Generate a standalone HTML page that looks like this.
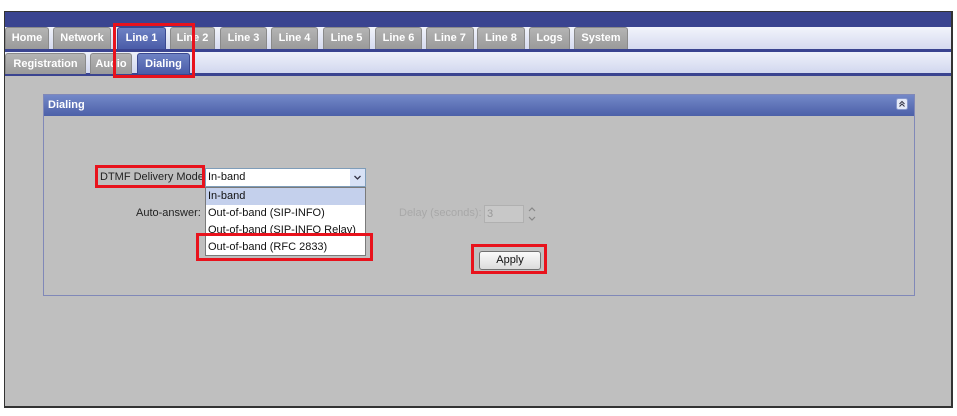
<!DOCTYPE html>
<html><head><style>
*{margin:0;padding:0;box-sizing:border-box}
body{width:957px;height:416px;background:#fff;position:relative;overflow:hidden;font-family:"Liberation Sans",sans-serif;font-size:11px}
.a{position:absolute;white-space:nowrap}
.tab{position:absolute;top:27px;height:22px;background:linear-gradient(#b4b4b4,#9a9a9a);border:1px solid #8a8a8a;border-bottom:none;border-radius:3px 3px 0 0;color:#fff;font-weight:bold;font-size:11px;line-height:21px;text-align:center;white-space:nowrap}
.sel{background:linear-gradient(#6e82c4,#4a5ca8);border-color:#3a4890}
.st{top:53px;height:21px}
.red{position:absolute;border:3px solid #e8121c}
.lbl{position:absolute;color:#222;font-size:11px;white-space:nowrap}
.it{position:absolute;left:0;width:100%;height:17px;padding-left:2px;line-height:17px;color:#111;font-size:11px;white-space:nowrap;overflow:hidden}
</style></head><body>
<div class="a" style="left:4px;top:11px;width:949px;height:397px;background:#bfbfbf;border:1px solid #333;border-width:1px 2px 2px 1px"></div>
<div class="a" style="left:5px;top:12px;width:946px;height:15px;background:#3a4490"></div>
<div class="a" style="left:5px;top:27px;width:946px;height:23px;background:linear-gradient(#f2f4fb,#d4d9ef)"></div>
<div class="a" style="left:5px;top:49px;width:946px;height:3px;background:#3a4490"></div>
<div class="a" style="left:5px;top:52px;width:946px;height:22px;background:linear-gradient(#eef1fa,#d0d6ee)"></div>
<div class="a" style="left:5px;top:73px;width:946px;height:3px;background:#3a4490"></div>

<div class="tab" style="left:5px;width:44px">Home</div>
<div class="tab" style="left:53px;width:58px">Network</div>
<div class="tab sel" style="left:117px;width:49px">Line 1</div>
<div class="tab" style="left:170px;width:45px">Line 2</div>
<div class="tab" style="left:220px;width:47px">Line 3</div>
<div class="tab" style="left:271px;width:47px">Line 4</div>
<div class="tab" style="left:323px;width:47px">Line 5</div>
<div class="tab" style="left:375px;width:47px">Line 6</div>
<div class="tab" style="left:426px;width:48px">Line 7</div>
<div class="tab" style="left:477px;width:48px">Line 8</div>
<div class="tab" style="left:529px;width:41px">Logs</div>
<div class="tab" style="left:574px;width:54px">System</div>

<div class="tab st" style="left:5px;width:81px">Registration</div>
<div class="tab st" style="left:90px;width:42px">Audio</div>
<div class="tab st sel" style="left:137px;width:53px">Dialing</div>

<div class="a" style="left:43px;top:94px;width:872px;height:202px;background:#bfbfbf;border:1px solid #8088b8"></div>
<div class="a" style="left:44px;top:95px;width:870px;height:21px;background:linear-gradient(#7388c8,#4c60a8);color:#fff;font-weight:bold;font-size:11px;line-height:20px;padding-left:4px">Dialing</div>
<svg class="a" style="left:896px;top:98px" width="12" height="12" viewBox="0 0 12 12"><rect x="0.5" y="0.5" width="11" height="11" rx="2" fill="#e4e9f7" stroke="#8898cc"/><path d="M3.5 6 L6 3.5 L8.5 6 M3.5 8.5 L6 6 L8.5 8.5" fill="none" stroke="#334" stroke-width="1"/></svg>

<div class="lbl" style="left:100px;top:171px">DTMF Delivery Mode:</div>
<div class="lbl" style="left:136px;top:207px">Auto-answer:</div>
<div class="a" style="left:205px;top:168px;width:161px;height:19px;background:#fff;border:1px solid #7f9db9;font-size:11px;line-height:17px;padding-left:2px;color:#111">In-band</div>
<svg class="a" style="left:350px;top:169px" width="15" height="17" viewBox="0 0 15 17"><rect width="15" height="17" fill="#d8e2f6"/><path d="M4.5 7 L7.5 10 L10.5 7" fill="none" stroke="#334" stroke-width="1.3"/></svg>
<div class="a" style="left:205px;top:187px;width:161px;height:69px;background:#fff;border:1px solid #7a7a7a">
<div class="it" style="top:0;background:#c4d0ec">In-band</div>
<div class="it" style="top:17px">Out-of-band (SIP-INFO)</div>
<div class="it" style="top:34px">Out-of-band (SIP-INFO Relay)</div>
<div class="it" style="top:51px">Out-of-band (RFC 2833)</div>
</div>
<div class="lbl" style="left:399px;top:207px;color:#a8a8a8">Delay (seconds):</div>
<div class="a" style="left:484px;top:205px;width:40px;height:18px;background:#c8c8c8;border:1px solid #b0b0b0;color:#999;font-size:11px;line-height:16px;padding-left:2px">3</div>
<svg class="a" style="left:525px;top:205px" width="14" height="18" viewBox="0 0 14 18"><path d="M4 6 L7 3 L10 6 M4 12 L7 15 L10 12" fill="none" stroke="#888" stroke-width="1.2"/></svg>
<div class="a" style="left:479px;top:251px;width:62px;height:19px;background:linear-gradient(#fafafa,#dcdcdc);border:1px solid #707070;border-radius:3px;text-align:center;line-height:17px;font-size:11px;color:#111">Apply</div>

<div class="red" style="left:113px;top:23px;width:82px;height:55px"></div>
<div class="red" style="left:95px;top:165px;width:110px;height:23px"></div>
<div class="red" style="left:196px;top:233px;width:177px;height:28px"></div>
<div class="red" style="left:471px;top:244px;width:76px;height:30px"></div>
</body></html>
